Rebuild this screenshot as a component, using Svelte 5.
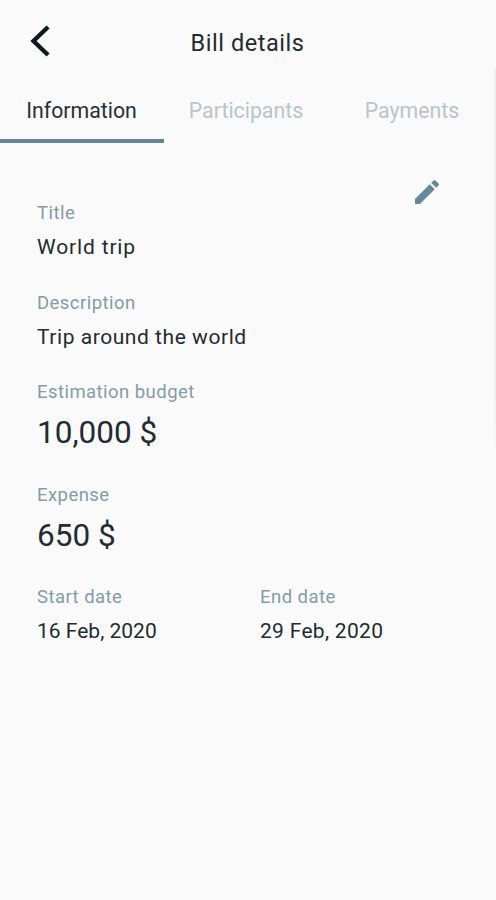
<script lang="ts">
  interface Field {
    label: string;
    value: string;
    large?: boolean;
    spacing: number;
  }

  const tabs = ['Information', 'Participants', 'Payments'];
  let active = $state('Information');

  const rows: Field[][] = [
    [{ label: 'Title', value: 'World trip', spacing: 0.85 }],
    [{ label: 'Description', value: 'Trip around the world', spacing: 0.55 }],
    [{ label: 'Estimation budget', value: '10,000 $', large: true, spacing: 0 }],
    [{ label: 'Expense', value: '650 $', large: true, spacing: 0 }],
    [
      { label: 'Start date', value: '16 Feb, 2020', spacing: 0 },
      { label: 'End date', value: '29 Feb, 2020', spacing: 0.3 },
    ],
  ];
</script>

<div class="screen">
  <header class="header">
    <button class="back" aria-label="Back">
      <svg width="22" height="34" viewBox="0 0 22 34" fill="none">
        <path d="M17.5 4.5L4.5 17L17.5 29.5" stroke="currentColor" stroke-width="4.4" stroke-linecap="square" />
      </svg>
    </button>
    <h1>Bill details</h1>
  </header>

  <nav class="tabs">
    {#each tabs as tab}
      <button class="tab" class:active={tab === active} onclick={() => (active = tab)}>{tab}</button>
    {/each}
  </nav>

  <main class="details">
    <div class="actions">
      <button class="edit" aria-label="Edit">
        <svg width="32" height="32" viewBox="0 0 24 24" fill="currentColor">
          <path d="M3 17.25V21h3.75L17.81 9.94l-3.75-3.75L3 17.25zM20.71 7.04a1 1 0 0 0 0-1.41l-2.34-2.34a1 1 0 0 0-1.41 0l-1.83 1.83 3.75 3.75 1.83-1.83z" />
        </svg>
      </button>
    </div>
    <div class="rows">
      {#each rows as row}
        <div class="row">
          {#each row as field}
            <div class="field">
              <span class="label">{field.label}</span>
              <span class="value" class:large={field.large} style="letter-spacing: {field.spacing}px">{field.value}</span>
            </div>
          {/each}
        </div>
      {/each}
    </div>
  </main>
  <div class="edge"></div>
</div>

<style>
  :global(body) {
    margin: 0;
    background: #fafafa;
  }

  .screen {
    position: relative;
    box-sizing: border-box;
    width: 496px;
    height: 900px;
    background: #fafafa;
    color: #222b30;
    font-family: Roboto, 'Noto Sans', sans-serif;
  }

  button {
    padding: 0;
    border: 0;
    background: none;
    color: inherit;
    font: inherit;
    cursor: pointer;
  }

  .header {
    display: grid;
    grid-template-columns: 60px 1fr 60px;
    align-items: center;
    height: 82px;
  }

  .back {
    display: flex;
    padding-left: 29px;
    color: #11191e;
  }

  h1 {
    margin: 0;
    padding-top: 3px;
    text-align: center;
    font-size: 23.5px;
    font-weight: 400;
    line-height: 30px;
    letter-spacing: 0.55px;
    text-indent: -1px;
  }

  .tabs {
    display: grid;
    grid-template-columns: 164px 165px 1fr;
    height: 61px;
  }

  .tab {
    padding-right: 1px;
    border-bottom: 4px solid transparent;
    color: #b9c5ca;
    font-size: 21.3px;
  }

  .tab.active {
    border-color: #648596;
    color: #263036;
  }

  .details {
    padding: 33px 37px 0;
  }

  .actions {
    display: flex;
    justify-content: flex-end;
    height: 25px;
    padding-right: 16px;
  }

  .edit {
    display: flex;
    height: 32px;
    color: #66899a;
  }

  .rows {
    display: flex;
    flex-direction: column;
    gap: 28.5px;
  }

  .row {
    display: grid;
    grid-template-columns: 223px 1fr;
  }

  .field {
    display: flex;
    flex-direction: column;
    gap: 7px;
    white-space: nowrap;
  }

  .label {
    color: #839ca7;
    font-size: 18.5px;
    line-height: 24px;
    letter-spacing: 0.45px;
  }

  .value {
    font-size: 21px;
    line-height: 30px;
  }

  .value.large {
    font-size: 31.5px;
    line-height: 43px;
  }

  /* faint shadow along the right side */
  .edge {
    position: absolute;
    top: 68px;
    right: 0;
    width: 2px;
    height: 390px;
    background: linear-gradient(#f0f0f0 85%, #fafafa);
  }
</style>
